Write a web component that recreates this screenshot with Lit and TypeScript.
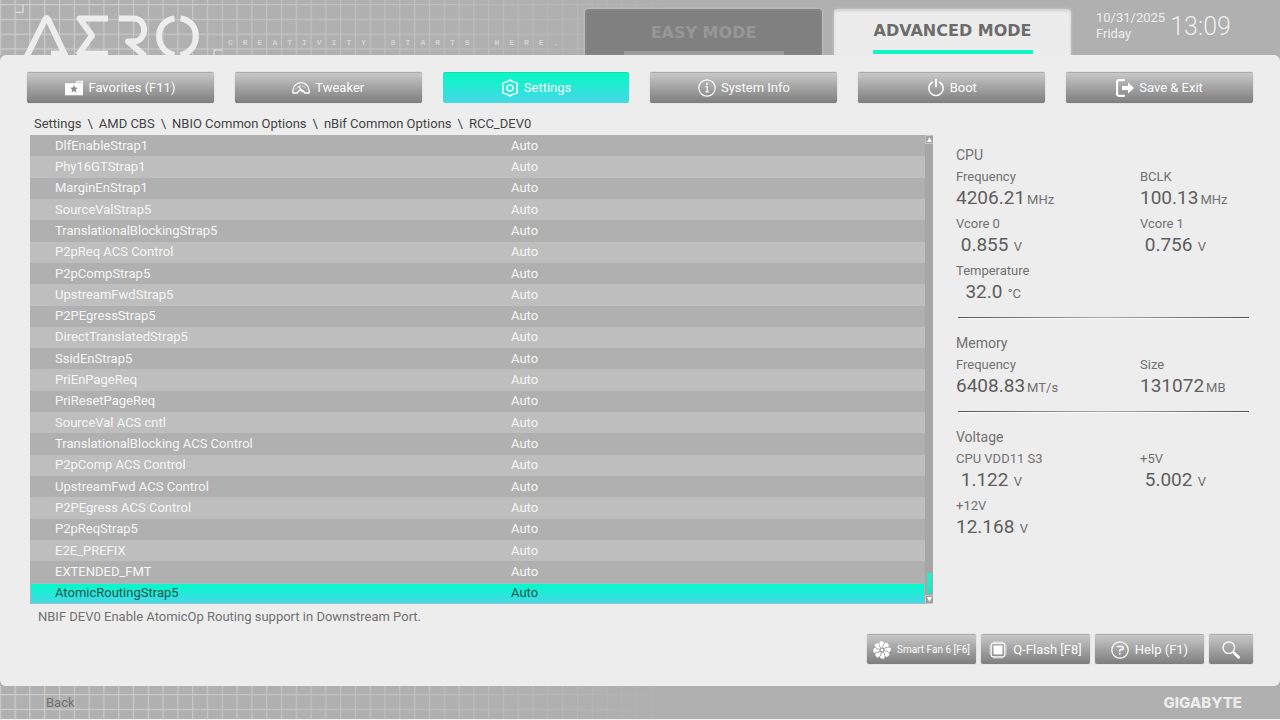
import { LitElement, html, svg, css, nothing } from "lit";
import { customElement, state } from "lit/decorators.js";
import { classMap } from "lit/directives/class-map.js";

const PATH = ["Settings", "AMD CBS", "NBIO Common Options", "nBif Common Options", "RCC_DEV0"];

const OPTIONS = [
  "DlfEnableStrap1", "Phy16GTStrap1", "MarginEnStrap1", "SourceValStrap5",
  "TranslationalBlockingStrap5", "P2pReq ACS Control", "P2pCompStrap5",
  "UpstreamFwdStrap5", "P2PEgressStrap5", "DirectTranslatedStrap5", "SsidEnStrap5",
  "PriEnPageReq", "PriResetPageReq", "SourceVal ACS cntl",
  "TranslationalBlocking ACS Control", "P2pComp ACS Control",
  "UpstreamFwd ACS Control", "P2PEgress ACS Control", "P2pReqStrap5",
  "E2E_PREFIX", "EXTENDED_FMT", "AtomicRoutingStrap5",
];

/* Values are padded to a fixed width, as the firmware reports them. */
const READINGS: { title: string; items: [string, string, string][] }[] = [
  {
    title: "CPU",
    items: [
      ["Frequency", "4206.21", "MHz"],
      ["BCLK", "100.13", "MHz"],
      ["Vcore 0", " 0.855", " V"],
      ["Vcore 1", " 0.756", " V"],
      ["Temperature", "  32.0", " °C"],
    ],
  },
  {
    title: "Memory",
    items: [
      ["Frequency", "6408.83", "MT/s"],
      ["Size", "131072", "MB"],
    ],
  },
  {
    title: "Voltage",
    items: [
      ["CPU VDD11 S3", " 1.122", " V"],
      ["+5V", " 5.002", " V"],
      ["+12V", "12.168", " V"],
    ],
  },
];

const icon = (body: unknown) =>
  html`<svg class="icon" viewBox="0 0 18 18" width="18" height="18" aria-hidden="true">${body}</svg>`;

const blade = (angle: number) =>
  svg`<path transform="rotate(${angle} 9 9)" d="M8.2 6.4 C6.4 5 5.8 2 7 .4 C9 -.2 11.4 .8 11.2 2.6 C9.8 3 9.2 4.6 9.5 6.4 Z" fill="#fff"/>`;

const ICONS = {
  favorites: icon(svg`<path d="M0 4.2 H10.6 L11.4 1.8 H18 V16.2 H0 Z" fill="#fff"/>
    <path d="M11.6 3.2 H16.8" stroke="#a4a4a4" stroke-width=".7"/>
    <path d="M9 6 L10.1 8.6 L12.9 8.8 L10.8 10.6 L11.5 13.4 L9 11.9 L6.5 13.4 L7.2 10.6 L5.1 8.8 L7.9 8.6 Z" fill="#8d8d8d"/>`),
  tweaker: icon(svg`<path d="M.9 14 V11.8 A8.1 8.1 0 0 1 17.1 11.8 V14 H12.6 A3.7 3.7 0 0 0 5.4 14 Z" fill="none" stroke="#fff" stroke-width="1.3" stroke-linejoin="round"/>
    <path d="M3.6 10.4 A6 6 0 0 1 14.4 10.4" fill="none" stroke="#fff" stroke-width="1" stroke-dasharray="1.4 1.2"/>
    <path d="M6.6 7.4 L10.6 13.2" stroke="#fff" stroke-width="1.5"/>`),
  settings: icon(svg`<path d="M9 .8 L11.6 2.6 L15.9 3.8 Q16.800 5 16 7.200 Q15.600 9 16 10.800 Q16.800 13 15.900 14.200 L11.6 15.4 L9 17.2 L6.4 15.4 L2.1 14.2 Q1.200 13 2 10.800 Q2.400 9 2 7.200 Q1.200 5 2.1 3.8 L6.4 2.6 Z" fill="none" stroke="#fff" stroke-width="1.4" stroke-linejoin="round"/>
    <circle cx="9" cy="9" r="3" fill="none" stroke="#fff" stroke-width="1.4"/>`),
  info: icon(svg`<circle cx="9" cy="9" r="8.2" fill="none" stroke="#fff" stroke-width="1.2"/>
    <circle cx="9" cy="5" r="1" fill="#fff"/><path d="M7.6 7.6 H9.2 V12.8 M7.4 12.9 H10.8" fill="none" stroke="#fff" stroke-width="1.2"/>`),
  boot: icon(svg`<path d="M5.2 3.2 A7.2 7.2 0 1 0 12.8 3.2" fill="none" stroke="#fff" stroke-width="1.6" stroke-linecap="round"/>
    <path d="M9 .6 V7.4" stroke="#fff" stroke-width="1.8" stroke-linecap="round"/>`),
  exit: icon(svg`<path d="M8 1.2 H3 Q1 1.2 1 3.2 V14.8 Q1 16.8 3 16.8 H8" fill="none" stroke="#fff" stroke-width="2.2" stroke-linecap="round"/>
    <path d="M6 7 H12 V3.6 L18 9 L12 14.4 V11 H6 Z" fill="#fff"/>`),
  fan: icon(svg`${[0, 45, 90, 135, 180, 225, 270, 315].map(blade)}<circle cx="9" cy="9" r="1.2" fill="#fff"/>`),
  flash: icon(svg`<rect x="2.2" y="2.2" width="13.6" height="13.6" rx="2" fill="none" stroke="#fff" stroke-width="1.2"/>
    <rect x="4.6" y="4.6" width="8.8" height="8.8" fill="#fff"/>
    <path d="M4.5 1 H13.5 M4.5 17 H13.5 M1 4.5 V13.5 M17 4.5 V13.5" stroke="#fff" stroke-width="1" stroke-dasharray="1 1"/>`),
  help: icon(svg`<circle cx="9" cy="9" r="8.2" fill="none" stroke="#fff" stroke-width="1.2"/>
    <path d="M5.8 5.4 H11 Q12.2 5.4 12.2 6.6 V7.4 Q12.2 8.6 11 8.6 H9.8 Q8.8 8.6 8.8 9.6 V11" fill="none" stroke="#fff" stroke-width="1.5"/><rect x="8" y="12" width="1.6" height="1.6" fill="#fff"/>`),
  search: icon(svg`<circle cx="6.8" cy="6.6" r="5.8" fill="none" stroke="#fff" stroke-width="1.3"/>
    <path d="M11 10.8 L12.4 12.2" stroke="#fff" stroke-width="1.3"/><path d="M12.4 12.2 L16.6 16.2" stroke="#fff" stroke-width="2.8" stroke-linecap="round"/>`),
};

const NAV: { label: string; glyph: unknown }[] = [
  { label: "Favorites (F11)", glyph: ICONS.favorites },
  { label: "Tweaker", glyph: ICONS.tweaker },
  { label: "Settings", glyph: ICONS.settings },
  { label: "System Info", glyph: ICONS.info },
  { label: "Boot", glyph: ICONS.boot },
  { label: "Save & Exit", glyph: ICONS.exit },
];

/* Drafting-paper lines that fade out towards the right. */
const gridLines = (id: string, firstRow: number) => html`
  <svg class="lines" width="100%" height="100%" aria-hidden="true">
    <defs>
      <pattern id="${id}-p" width="14.8" height="14.8" patternUnits="userSpaceOnUse" y="${firstRow}" x="14.5">
        <path d="M0 .6 H14.8 M.6 0 V14.8" stroke="#dedede" stroke-width="1.2"/>
      </pattern>
      <linearGradient id="${id}-g">
        <stop offset="0" stop-color="#fff" stop-opacity=".65"/>
        <stop offset=".17" stop-color="#fff" stop-opacity=".5"/>
        <stop offset=".36" stop-color="#fff" stop-opacity=".28"/>
        <stop offset=".54" stop-color="#fff" stop-opacity="0"/>
      </linearGradient>
      <mask id="${id}-m"><rect width="100%" height="100%" fill="url(#${id}-g)"/></mask>
    </defs>
    <rect width="100%" height="100%" fill="url(#${id}-p)" mask="url(#${id}-m)"/>
  </svg>`;

@customElement("app-root")
export class AppRoot extends LitElement {
  @state() private selected = OPTIONS.length - 1;
  @state() private page = 2;

  static styles = css`
    :host {
      display: flex;
      flex-direction: column;
      min-height: 100vh;
      box-sizing: border-box;
      background: #b0b0b0;
      color: #717171;
      font: 13px/20px Roboto, "Noto Sans", sans-serif;
    }
    *, *::before { box-sizing: border-box; }
    button { font: inherit; color: inherit; border: 0; background: none; padding: 0; margin: 0; cursor: pointer; }
    .icon { display: block; flex: none; }
    .lines { position: absolute; inset: 0; }

    .top { position: relative; display: flex; height: 55px; overflow: hidden; }
    .logo { position: relative; flex: none; display: block; }
    .tagline {
      position: relative;
      align-self: flex-end;
      margin: 0 0 0 5px;
      font: bold 8px/24px "Liberation Mono", monospace;
      letter-spacing: 10px;
      color: #d4d4d4;
      white-space: nowrap;
    }
    .modes { position: relative; display: flex; gap: 12px; margin-left: auto; align-items: flex-end; }
    .mode {
      display: flex;
      flex-direction: column;
      align-items: center;
      justify-content: space-between;
      width: 237px;
      height: 46px;
      padding-top: 14px;
      border-radius: 4px 4px 0 0;
      font: bold 16px/20px "DejaVu Sans", sans-serif;
      background: #808080;
      color: #979797;
      box-shadow: 0 0 3px #c9c9c9, inset 0 0 3px #929292;
    }
    .mode::after { content: ""; width: 160px; height: 4px; background: #9c9c9c; }
    .mode.on { background: #ececec; color: #6c6c6c; padding: 12px 0 1px; box-shadow: 0 0 3px #d0d0d0, inset 0 2px 3px #cfcfcf; }
    .mode.on::after { background: #0ff7c6; }
    .clock { position: relative; display: flex; gap: 5px; width: 184px; margin-left: 25px; padding-top: 10px; color: #eee; }
    .date { font-size: 13px; line-height: 16px; }
    .time { font-size: 25px; line-height: 34px; font-weight: 300; }

    .panel { flex: 1; display: flex; flex-direction: column; background: #ededed; border-radius: 6px; padding: 17px 27px 22px; }
    .nav { display: grid; grid-template-columns: repeat(6, minmax(0, 1fr)); gap: 21px; }
    .btn {
      display: flex;
      align-items: center;
      justify-content: center;
      gap: 5px;
      height: 31px;
      color: #fcfcfc;
      white-space: nowrap;
      border-radius: 2px;
      border-top: 1px solid #ababab;
      background: linear-gradient(#c8c8c8, #a2a2a2 50%, #7e7e7e);
      box-shadow: 0 0 1px #8a8a8a;
    }
    .btn.on { border-color: #19d9b2; background: linear-gradient(#07f8c4, #46d7e6); box-shadow: none; }

    .crumbs { display: flex; gap: 6px; list-style: none; margin: 11px 0 1px; padding: 0 7px; color: #444; }
    .crumbs a { color: inherit; text-decoration: none; }

    .body { flex: 1; display: grid; grid-template-columns: minmax(0, 1fr) 294px; gap: 23px; padding: 0 3px; }
    .left { display: flex; flex-direction: column; }
    .list { flex: 1; display: grid; grid-template-columns: minmax(0, 1fr) 8px; background: #a9a9a9; }
    .options { width: 100%; height: 100%; border-collapse: collapse; table-layout: fixed; color: #f6f6f6; }
    .options th { width: 481px; padding: 0 0 0 25px; text-align: left; font-weight: 400; }
    .options td { padding: 0; }
    .options th, .options td { line-height: 18px; }
    .row { background: #b0b0b0; }
    .row:nth-child(even) { background: #bebebe; }
    .row.on { background: linear-gradient(#00fcc8, #48d6e8); color: #24524e; box-shadow: inset 0 0 0 1px #9cbcc0; }
    .bar { display: flex; flex-direction: column; background: #a6a6a6; }
    .arrow { display: flex; align-items: center; justify-content: center; height: 9px; background: #a0a0a0; border: 1px solid #c4c4c4; border-right: 0; }
    .track { flex: 1; display: flex; flex-direction: column; justify-content: flex-end; padding: 0 1px 1px 2px; }
    .thumb { height: 21px; background: linear-gradient(#20f2c4, #30dcc4); }
    .note { margin: 3px 0 7px; padding-left: 8px; }

    .side { padding-top: 8px; }
    .group + .group { margin-top: 14px; }
    .group + .group::before {
      content: "";
      display: block;
      height: 1px;
      margin: 0 1px 13px 2px;
      background: linear-gradient(90deg, #555, #a8a8a8, #555);
      box-shadow: 0 1px 0 #fafafa;
    }
    .group h2 { margin: 0; font-size: 14px; line-height: 24px; font-weight: 400; }
    .group dl { display: grid; grid-template-columns: 184px 1fr; row-gap: 5px; margin: 0; }
    .group dt { line-height: 20px; }
    .group dd { display: flex; align-items: baseline; margin: 0; line-height: 22px; white-space: pre; }
    .value { font-size: 19px; color: #5e5e5e; }
    .unit { padding-left: 2px; align-self: flex-end; line-height: 18px; }

    .tools { display: flex; justify-content: flex-end; gap: 5px; }
    .tools .btn { width: 109px; height: 30px; gap: 6px; }
    .tools .small { font-size: 10px; }
    .tools .find { width: 44px; }

    .foot { position: relative; display: flex; align-items: center; justify-content: space-between; height: 34px; padding: 0 38px 0 46px; border-bottom: 1px solid #f2f2f2; }
    .foot button, .brand { position: relative; }
    .brand { font: 800 15px/20px Inter, sans-serif; color: #ececec; }
  `;

  private logo() {
    return svg`<svg class="logo" width="223" height="55" viewBox="0 0 223 55" role="img" aria-label="AERO">
      <g fill="none" stroke="#dadada" stroke-width="1.4">
        <path d="M15 12.4 H23 V5"/><path d="M214 55 V50 H222"/>
      </g>
      <g fill="none" stroke="#ededed" stroke-width="6" stroke-linejoin="round">
        <path d="M26.5 57 L45 19.5 Q46.5 16.5 48.2 19.5 L66 57"/>
        <path d="M51 53.6 H63"/>
        <path d="M108 18.5 H79.5 L92 35.5 L78 55"/>
        <path d="M82 53.6 H108"/>
        <path d="M119 18.5 H134 C147 18.5 148 40.5 134 41.5 H128 L145 56"/>
        <path d="M174.5 18.5 C154 21 154 51 174.5 55"/>
        <path d="M180.5 18.5 C201 21 201 51 180.5 55"/>
      </g>
    </svg>`;
  }

  private row(name: string, i: number) {
    return html`<tr class=${classMap({ row: true, on: i === this.selected })} @click=${() => (this.selected = i)}>
      <th scope="row">${name}</th><td>Auto</td>
    </tr>`;
  }

  render() {
    return html`
      <header class="top">
        ${gridLines("head", 4)}
        ${this.logo()}
        <p class="tagline">CREATIVITY STARTS HERE.</p>
        <div class="modes">
          <button class="mode">EASY MODE</button>
          <button class="mode on">ADVANCED MODE</button>
        </div>
        <div class="clock">
          <div class="date">10/31/2025<br />Friday</div>
          <div class="time">13:09</div>
        </div>
      </header>

      <main class="panel">
        <nav class="nav">
          ${NAV.map(({ label, glyph }, i) => html`
            <button class=${classMap({ btn: true, on: i === this.page })} @click=${() => (this.page = i)}>${glyph}${label}</button>`)}
        </nav>
        <ol class="crumbs">
          ${PATH.map((step, i) => html`${i ? html`<li aria-hidden="true">\\</li>` : nothing}<li><a href="#">${step}</a></li>`)}
        </ol>

        <div class="body">
          <section class="left">
            <div class="list">
              <table class="options"><tbody>${OPTIONS.map((o, i) => this.row(o, i))}</tbody></table>
              <div class="bar">
                <button class="arrow" aria-label="Scroll up"><svg width="5" height="5" viewBox="0 0 10 10"><path d="M5 0 L10 10 H0 Z" fill="#fff"/></svg></button>
                <div class="track"><div class="thumb"></div></div>
                <button class="arrow" aria-label="Scroll down"><svg width="5" height="5" viewBox="0 0 10 10"><path d="M0 0 H10 L5 10 Z" fill="#fff"/></svg></button>
              </div>
            </div>
            <p class="note">NBIF DEV0 Enable AtomicOp Routing support in Downstream Port.</p>
          </section>

          <aside class="side">
            ${READINGS.map((g) => html`
              <section class="group">
                <h2>${g.title}</h2>
                <dl>
                  ${g.items.map(([label, value, unit]) => html`
                    <div><dt>${label}</dt><dd><span class="value">${value}</span><span class="unit">${unit}</span></dd></div>`)}
                </dl>
              </section>`)}
          </aside>
        </div>

        <div class="tools">
          <button class="btn small">${ICONS.fan}Smart Fan 6 [F6]</button>
          <button class="btn">${ICONS.flash}Q-Flash [F8]</button>
          <button class="btn">${ICONS.help}Help (F1)</button>
          <button class="btn find" aria-label="Search">${ICONS.search}</button>
        </div>
      </main>

      <footer class="foot">
        ${gridLines("foot", 8)}
        <button>Back</button>
        <span class="brand">GIGABYTE</span>
      </footer>
    `;
  }
}
